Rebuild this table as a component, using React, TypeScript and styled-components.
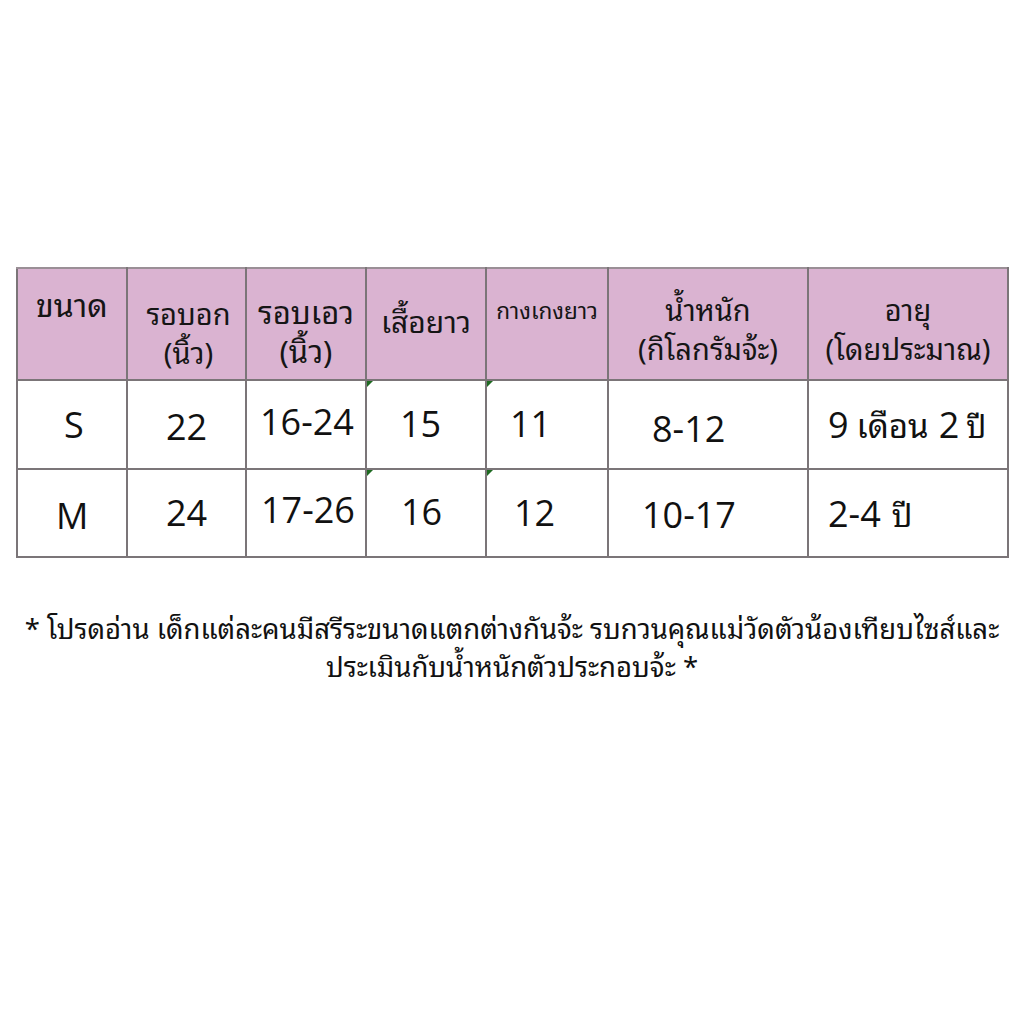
import React from "react";
import styled, { createGlobalStyle } from "styled-components";

const Global = createGlobalStyle`
  html, body { margin: 0; padding: 0; background: #ffffff; }
  body { font-family: "Open Sans", "Noto Sans Thai", "Noto Sans", sans-serif; color: #111; }
`;

const THAI = `"Noto Sans Thai Looped", "Loma", "Garuda", "Laksaman", "Norasi", "Noto Sans Thai", "Noto Sans", sans-serif`;

const Page = styled.div`
  width: 1024px;
  height: 1024px;
  display: flex;
  flex-direction: column;
  align-items: stretch;
  padding-top: 267px;
  box-sizing: border-box;
`;

const TableWrap = styled.div`
  padding-left: 16px;
`;

const Table = styled.table`
  border-collapse: collapse;
  table-layout: fixed;
  width: 991px;
`;

const Col = styled.col<{ $w: number }>`
  width: ${(p) => p.$w}px;
`;

const HeadRow = styled.tr`
  height: 112px;
  background: #dab3d1;
`;

const BodyRow = styled.tr<{ $h: number }>`
  height: ${(p) => p.$h}px;
  background: #ffffff;
`;

const Th = styled.th<{ $align?: string; $pt?: number; $pl?: number; $size?: number }>`
  border: 2px solid #7b7578;
  border-top-color: #9a8f96;
  padding: ${(p) => p.$pt ?? 0}px 0 0 ${(p) => p.$pl ?? 0}px;
  vertical-align: top;
  text-align: ${(p) => p.$align ?? "center"};
  font-weight: 400;
  font-size: ${(p) => p.$size ?? 29}px;
  line-height: 39px;
  color: #151515;
  font-family: ${THAI};
  white-space: nowrap;
`;

const Td = styled.td<{ $pl?: number; $pt?: number; $mark?: boolean }>`
  position: relative;
  border: 2px solid #7b7578;
  padding: ${(p) => p.$pt ?? 0}px 0 0 ${(p) => p.$pl ?? 0}px;
  vertical-align: top;
  text-align: left;
  font-size: 36px;
  line-height: 40px;
  color: #111;
  font-family: "Open Sans", sans-serif;
  white-space: nowrap;
  &::before {
    content: "";
    display: ${(p) => (p.$mark ? "block" : "none")};
    position: absolute;
    left: 0;
    top: 0;
    width: 0;
    height: 0;
    border-top: 6px solid #1f6b22;
    border-right: 6px solid transparent;
  }
`;

const Thai = styled.span<{ $size?: number; $ml?: number; $mr?: number }>`
  font-family: ${THAI};
  font-size: ${(p) => p.$size ?? 30}px;
  margin-left: ${(p) => p.$ml ?? 0}px;
  margin-right: ${(p) => p.$mr ?? 0}px;
`;

const Note = styled.div`
  margin-top: 50px;
  text-align: center;
  font-family: ${THAI};
  font-size: 27.5px;
  line-height: 38px;
  color: #111;
  white-space: nowrap;
`;

const Line = styled.div``;

export default function App() {
  return (
    <Page>
      <Global />
      <TableWrap>
        <Table>
          <colgroup>
            <Col $w={110} />
            <Col $w={119} />
            <Col $w={120} />
            <Col $w={120} />
            <Col $w={122} />
            <Col $w={200} />
            <Col $w={200} />
          </colgroup>
          <tbody>
            <HeadRow>
              <Th $pt={14} $align="left" $pl={18} $size={32}>ขนาด</Th>
              <Th $pt={24} $pl={4}>รอบอก<br />(นิ้ว)</Th>
              <Th $pt={22} $size={31}>รอบเอว<br />(นิ้ว)</Th>
              <Th $pt={31} $size={30}>เสื้อยาว</Th>
              <Th $pt={21} $size={22.5}>กางเกงยาว</Th>
              <Th $pt={20}>น้ำหนัก<br />(กิโลกรัมจ้ะ)</Th>
              <Th $pt={20}>อายุ<br />(โดยประมาณ)</Th>
            </HeadRow>
            <BodyRow $h={89}>
              <Td $pl={46} $pt={24}>S</Td>
              <Td $pl={38} $pt={26}>22</Td>
              <Td $pl={13} $pt={21}>16-24</Td>
              <Td $pl={33} $pt={23} $mark>15</Td>
              <Td $pl={23} $pt={23} $mark>11</Td>
              <Td $pl={43} $pt={28}>8-12</Td>
              <Td $pl={19} $pt={23}>9<Thai $size={33} $ml={8} $mr={10}>เดือน</Thai>2<Thai $size={31} $ml={7}>ปี</Thai></Td>
            </BodyRow>
            <BodyRow $h={88}>
              <Td $pl={38} $pt={26}>M</Td>
              <Td $pl={38} $pt={23}>24</Td>
              <Td $pl={14} $pt={20}>17-26</Td>
              <Td $pl={34} $pt={22} $mark>16</Td>
              <Td $pl={27} $pt={23} $mark>12</Td>
              <Td $pl={33} $pt={25}>10-17</Td>
              <Td $pl={19} $pt={23}>2-4<Thai $size={32} $ml={11}>ปี</Thai></Td>
            </BodyRow>
          </tbody>
        </Table>
      </TableWrap>
      <Note>
        <Line>* โปรดอ่าน เด็กแต่ละคนมีสรีระขนาดแตกต่างกันจ้ะ รบกวนคุณแม่วัดตัวน้องเทียบไซส์และ</Line>
        <Line>ประเมินกับน้ำหนักตัวประกอบจ้ะ *</Line>
      </Note>
    </Page>
  );
}
